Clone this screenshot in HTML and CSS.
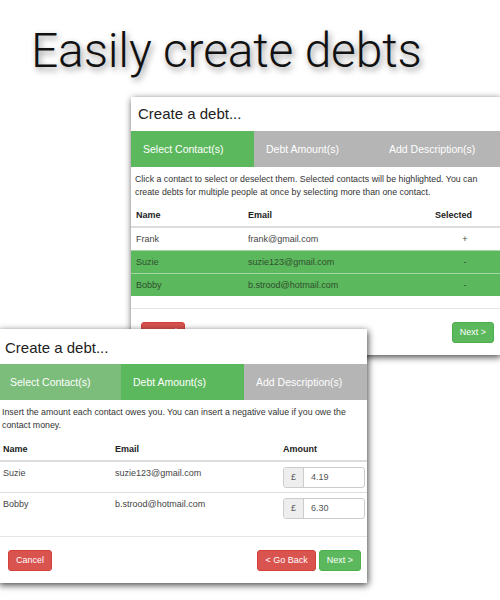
FILE: index.html
```html
<!DOCTYPE html>
<html>
<head>
<meta charset="utf-8">
<link rel="stylesheet" href="styles.css">
</head>
<body>
<div class="canvas">
  <h1 class="headline">Easily create debts</h1>

  <div class="panel panel-back">
    <div class="panel-title">Create a debt...</div>
    <div class="tabs">
      <div class="tab tab-active">Select Contact(s)</div>
      <div class="tab">Debt Amount(s)</div>
      <div class="tab">Add Description(s)</div>
    </div>
    <p class="desc">Click a contact to select or deselect them. Selected contacts will be highlighted. You can create debts for multiple people at once by selecting more than one contact.</p>
    <table class="tbl tbl-select">
      <thead>
        <tr><th class="c1">Name</th><th class="c2">Email</th><th class="c3">Selected</th></tr>
      </thead>
      <tbody>
        <tr><td>Frank</td><td>frank@gmail.com</td><td class="mid">+</td></tr>
        <tr class="sel"><td>Suzie</td><td>suzie123@gmail.com</td><td class="mid">-</td></tr>
        <tr class="sel"><td>Bobby</td><td>b.strood@hotmail.com</td><td class="mid">-</td></tr>
      </tbody>
    </table>
    <div class="footer">
      <button class="btn btn-red">Cancel</button>
      <div class="right">
        <button class="btn btn-green">Next &gt;</button>
      </div>
    </div>
  </div>

  <div class="panel panel-front">
    <div class="panel-title">Create a debt...</div>
    <div class="tabs">
      <div class="tab tab-done">Select Contact(s)</div>
      <div class="tab tab-active">Debt Amount(s)</div>
      <div class="tab">Add Description(s)</div>
    </div>
    <p class="desc">Insert the amount each contact owes you. You can insert a negative value if you owe the contact money.</p>
    <table class="tbl tbl-amount">
      <thead>
        <tr><th class="c1">Name</th><th class="c2b">Email</th><th class="c3b">Amount</th></tr>
      </thead>
      <tbody>
        <tr><td>Suzie</td><td>suzie123@gmail.com</td><td class="amt"><div class="igroup"><span class="addon">£</span><span class="field">4.19</span></div></td></tr>
        <tr><td>Bobby</td><td>b.strood@hotmail.com</td><td class="amt"><div class="igroup"><span class="addon">£</span><span class="field">6.30</span></div></td></tr>
      </tbody>
    </table>
    <div class="footer">
      <button class="btn btn-red">Cancel</button>
      <div class="right">
        <button class="btn btn-red">&lt; Go Back</button>
        <button class="btn btn-green">Next &gt;</button>
      </div>
    </div>
  </div>
</div>
</body>
</html>
```

FILE: styles.css
```css
* { box-sizing: border-box; }
html, body { margin: 0; padding: 0; background: #fff; }
.canvas {
  position: relative;
  width: 500px;
  height: 600px;
  overflow: hidden;
  font-family: "Liberation Sans", Arial, sans-serif;
  color: #333;
}
.headline {
  margin: 0;
  padding: 23px 0 0 31px;
  font-family: Roboto, "Liberation Sans", sans-serif;
  font-weight: 300;
  font-size: 48px;
  line-height: 56px;
  color: #111;
  letter-spacing: -0.2px;
  text-shadow: 2px 3px 6px rgba(0,0,0,0.45);
}
.panel {
  position: absolute;
  width: 369px;
  background: #fff;
  box-shadow: 1px 2px 7px rgba(0,0,0,0.75);
}
.panel-back { left: 131px; top: 97px; }
.panel-front { left: -2px; top: 329px; }
.panel-title {
  font-size: 15px;
  line-height: 18px;
  padding: 8px 6px 8px 7px;
  color: #222;
}
.panel-front .panel-title { padding-top: 10px; padding-bottom: 7px; }
.tabs { display: flex; height: 36px; }
.tab {
  flex: 1;
  background: #b5b5b5;
  color: #fff;
  font-size: 10.5px;
  line-height: 36px;
  padding-left: 12px;
  white-space: nowrap;
}
.tab-active { background: #5cb85c; }
.tab-done { background: #7cbd7c; }
.desc {
  margin: 0;
  padding: 6px 4px 0 4px;
  font-size: 8.8px;
  line-height: 13px;
  color: #333;
}
.tbl {
  width: 100%;
  border-collapse: collapse;
  table-layout: fixed;
  font-size: 9px;
  line-height: 12px;
  margin-top: 5px;
}
.tbl-amount { margin-top: 6px; }
.tbl th {
  text-align: left;
  font-weight: bold;
  padding: 5px 5px 5px 5px;
  border-bottom: 2px solid #ddd;
  color: #222;
}
.tbl td {
  padding: 5px;
  border-top: 1px solid #ddd;
  vertical-align: top;
  color: #444;
}
.c1 { width: 112px; }
.c2 { width: 187px; }
.c3 { width: 70px; }
.c2b { width: 168px; }
.c3b { width: 89px; }
.mid { text-align: center; }
.tbl-select tr.sel td {
  background: #5cb85c;
  color: #2f4f2f;
  border-top: 1px solid #a6d6a6;
}
.tbl-amount td { padding-bottom: 4px; }
.tbl-amount td.amt { padding: 5px 2px 4px 5px; }
.igroup {
  display: flex;
  height: 21px;
  width: 82px;
  border: 1px solid #ccc;
  border-radius: 3px;
  overflow: hidden;
}
.addon {
  width: 20px;
  background: #eee;
  border-right: 1px solid #ccc;
  text-align: center;
  line-height: 19px;
  color: #555;
}
.field {
  flex: 1;
  padding-left: 7px;
  line-height: 19px;
  color: #555;
}
.footer {
  margin-top: 12px;
  border-top: 1px solid #e5e5e5;
  padding: 13px 6px 12px 10px;
  display: flex;
  justify-content: space-between;
}
.panel-front .footer { margin-top: 13px; }
.right { display: flex; gap: 3px; }
.btn {
  height: 21px;
  border: 1px solid transparent;
  border-radius: 3px;
  font-family: "Liberation Sans", Arial, sans-serif;
  font-size: 9px;
  color: #fff;
  padding: 0 7px;
  line-height: 19px;
}
.btn-red { background: #d9534f; border-color: #d43f3a; }
.btn-green { background: #5cb85c; border-color: #4cae4c; }
```
